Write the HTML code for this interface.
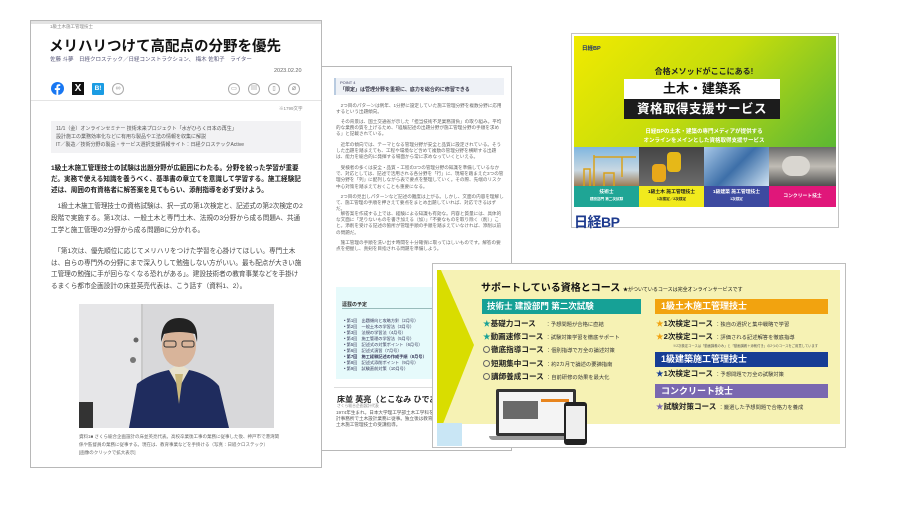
<!DOCTYPE html>
<html><head><meta charset="utf-8">
<style>
*{margin:0;padding:0;box-sizing:border-box}
body{width:900px;height:515px;background:#fff;position:relative;overflow:hidden;font-family:"Liberation Sans","Noto Sans CJK JP",sans-serif;color:#222}
.a{position:absolute}
.t{white-space:nowrap}
.card1{left:30px;top:20px;width:292px;height:448px;border:1px solid #b8b8b8;background:#fff}
.mid{left:321px;top:66px;width:191px;height:385px;border:1px solid #b8b8b8;background:#fff;overflow:hidden}
.mid p{position:absolute;left:14px;width:168px;font-size:4.6px;line-height:6.2px;color:#666}
.c4{left:432px;top:263px;width:414px;height:185px;border:1px solid #bdbdbd;background:#fff}
.it{font-size:7.6px;font-weight:bold;color:#222;line-height:10px}
.it span{font-size:5.3px;font-weight:normal;color:#333}
.circ{display:inline-block;width:7px;height:7px;border:1px solid #666;border-radius:50%;vertical-align:-1px;margin-right:1px}
</style></head><body>

<!-- Card 1 -->
<div class="a card1">
  <div class="a" style="left:0;top:0;width:290px;height:3px;background:#e3e3e3"></div>
  <div class="a t" style="left:19px;top:3px;font-size:4.5px;color:#888">1級土木施工管理技士</div>
  <div class="a t" style="left:18px;top:14px;font-size:14.5px;font-weight:bold;color:#111">メリハリつけて高配点の分野を優先</div>
  <div class="a t" style="left:19px;top:34px;font-size:5.5px;color:#557">佐藤 斗夢　日経クロステック／日経コンストラクション、 梅木 佐和子　ライター</div>
  <div class="a t" style="left:243px;top:47px;font-size:5.5px;color:#666">2023.02.20</div>
  <svg class="a" style="left:20px;top:61px" width="13" height="13" viewBox="0 0 13 13"><circle cx="6.5" cy="6.5" r="6.5" fill="#1877f2"/><path d="M7.3 13V8h1.6l.3-1.9H7.3V5c0-.6.2-1 1-1h1V2.4c-.2 0-.8-.1-1.5-.1-1.5 0-2.4.9-2.4 2.5v1.3H3.8V8h1.6v5z" fill="#fff"/></svg>
  <div class="a" style="left:41px;top:61px;width:12px;height:13px;background:#111;color:#fff;font-size:10px;line-height:13px;text-align:center;font-weight:bold">X</div>
  <div class="a" style="left:61px;top:62px;width:12px;height:12px;background:#1b9ce3;color:#fff;font-size:6.5px;line-height:12px;text-align:center;font-weight:bold;border-radius:1px">B!</div>
  <div class="a" style="left:81px;top:62px;width:12px;height:12px;border:1px solid #aaa;border-radius:50%;font-size:7px;line-height:10px;text-align:center;color:#999">∞</div>
  <div class="a" style="left:197px;top:62px;width:12px;height:12px;border:1px solid #aaa;border-radius:50%;font-size:6px;line-height:10px;text-align:center;color:#888">▭</div>
  <div class="a" style="left:217px;top:62px;width:12px;height:12px;border:1px solid #aaa;border-radius:50%;font-size:6px;line-height:10px;text-align:center;color:#888">▤</div>
  <div class="a" style="left:237px;top:62px;width:12px;height:12px;border:1px solid #aaa;border-radius:50%;font-size:6px;line-height:10px;text-align:center;color:#888">▯</div>
  <div class="a" style="left:257px;top:62px;width:12px;height:12px;border:1px solid #aaa;border-radius:50%;font-size:7px;line-height:10px;text-align:center;color:#888">⌀</div>
  <div class="a" style="left:0;top:79px;width:290px;height:1px;background:#e4e4e4"></div>
  <div class="a t" style="left:248px;top:85px;font-size:4.5px;color:#888">※1799文字</div>
  <div class="a" style="left:20px;top:100px;width:250px;height:32px;background:#f2f2f4"></div>
  <div class="a t" style="left:25px;top:104px;font-size:5px;line-height:8px;color:#555">11/1（金）オンラインセミナー 技術未来プロジェクト「水がひらく日本の再生」<br>設計施工の業務効率化などに有用な製品やエ法の情報を収集に解説<br>IT／製造／技術分野の製品・サービス選択支援情報サイト：日経クロステックActive</div>
  <div class="a" style="left:20px;top:142px;width:252px;font-size:6.6px;line-height:11.2px;font-weight:bold;color:#222">1級土木施工管理技士の試験は出題分野が広範囲にわたる。分野を絞った学習が重要だ。実務で使える知識を養うべく、基準書の章立てを意識して学習する。施工経験記述は、周囲の有資格者に解答案を見てもらい、添削指導を必ず受けよう。</div>
  <div class="a" style="left:20px;top:180px;width:252px;font-size:6.6px;line-height:11.8px;color:#444">　1級土木施工管理技士の資格試験は、択一式の第1次検定と、記述式の第2次検定の2段階で実施する。第1次は、一般土木と専門土木、法規の3分野から成る問題A、共通工学と施工管理の2分野から成る問題Bに分かれる。</div>
  <div class="a" style="left:20px;top:225px;width:252px;font-size:6.6px;line-height:11.6px;color:#444">　「第1次は、優先順位に応じてメリハリをつけた学習を心掛けてほしい。専門土木は、自らの専門外の分野にまで深入りして勉強しない方がいい。最も配点が大きい施工管理の勉強に手が回らなくなる恐れがある」。建設技術者の教育事業などを手掛けるまくら都市企画設計の床並英亮代表は、こう話す（資料1、2）。</div>
  <svg class="a" style="left:48px;top:283px" width="195" height="124" viewBox="0 0 195 124">
    <rect width="195" height="124" fill="#dedede"/>
    <rect x="0" y="0" width="62" height="124" fill="#e6e6e8"/>
    <rect x="62" y="0" width="2" height="124" fill="#c9c9c9"/>
    <rect x="64" y="0" width="131" height="124" fill="#d8d8da"/>
    <circle cx="57" cy="36" r="2.5" fill="#666"/><circle cx="54" cy="56" r="3" fill="#777"/>
    <rect x="0" y="98" width="14" height="26" fill="#333"/>
    <path d="M50 124 L58 80 Q70 70 90 66 L100 80 L110 66 Q130 70 140 82 L150 124Z" fill="#1f2c5e"/>
    <path d="M90 66 L100 84 L110 66 L104 62 L96 62Z" fill="#e8e2cc"/>
    <path d="M96 70 L100 100 L104 70Z" fill="#c9b77a"/>
    <ellipse cx="100" cy="42" rx="17" ry="21" fill="#d8b49a"/>
    <path d="M82 38 Q82 14 100 14 Q120 14 118 38 L116 30 Q100 26 85 30Z" fill="#222"/>
    <rect x="85" y="37" width="12" height="6" rx="2" fill="none" stroke="#333"/><rect x="103" y="37" width="12" height="6" rx="2" fill="none" stroke="#333"/>
  </svg>
  <div class="a" style="left:48px;top:412px;width:200px;font-size:4.5px;line-height:8px;color:#666">資料1■ さくら総合企画設計の床並英亮代表。高校卒業後工事の業務に従事した後、神戸市で港湾関係や監督員の業務に従事する。現在は、教育事業などを手掛ける（写真：日経クロステック）<br>[画像のクリックで拡大表示]</div>
</div>

<!-- Middle card -->
<div class="a mid">
  <div class="a" style="left:12px;top:11px;width:170px;height:17px;background:#eef1f6;border-left:2px solid #b9cbe0"></div>
  <div class="a t" style="left:18px;top:13px;font-size:4px;color:#446">POINT 4</div>
  <div class="a t" style="left:18px;top:19px;font-size:5px;color:#334;font-weight:bold">「限定」は管理分野を重視に、底力を総合的に修習できる</div>
  <p style="top:36px">　2つ目のパターンは例年、1分野に設定していた施工管理分野を複数分野に応用するという出題傾向。</p>
  <p style="top:52px">　その背景は、国土交通省が示した「担当技術不足業務請負」の取り組み。平均的な業務の質を上げるため、「経験記述の出題分野が施工管理分野の手順を求める」と記載されている。</p>
  <p style="top:75px">　近年の傾向では、テーマとなる管理分野が安全と品質に設定されている。そうした出題を踏まえても、工程や環境など含めて複数の管理分野を横断する出題は、能力を総合的に発揮する場面から常に求めなっていくといえる。</p>
  <p style="top:98px">　受検者の多くは安全・品質・工程の3つの管理分野の知識を準備しているなかで、対応としては、記述で活用される各分野を「行」に、現場を踏まえた3つの管理分野を「列」に配列しながら表で要点を整理していく。その際、先端のリスク中心対策を踏まえておくことも重要になる。</p>
  <p style="top:127px">　2つ目の見出しパターンなど記述の難度は上がる。しかし、文面の内容を理解して、施工管理の手順を押さえて要点をまとめ出題していれば、対応できるはずだ。</p>
  <p style="top:144px">　解答案を作成する上では、経験による知識も有効な。内容と質量には、具体的な文面に「足りないものを書き加える（加）」「不要なものを取り除く（削）」こと。添削を受ける記述の箇所が管理手順の手順を踏まえていなければ、添削以前の問題だ。</p>
  <p style="top:173px">　施工管理の手順を洗い出す時間を十分確保に取ってほしいものです。解答の要点を把握し、真剣を目指される問題を準備しよう。</p>
  <div class="a" style="left:14px;top:220px;width:170px;height:92px;background:#e6fafb"></div>
  <div class="a t" style="left:20px;top:234px;font-size:5px;font-weight:bold;color:#333">連載の予定</div>
  <div class="a" style="left:20px;top:241px;width:150px;height:1px;background:#9bb"></div>
  <div class="a" style="left:22px;top:251px;font-size:4.2px;line-height:6px;color:#335">• 第1回　出題傾向と攻略方針（2月号）<br>• 第2回　一般土木の学習法（3月号）<br>• 第3回　法規の学習法（4月号）<br>• 第4回　施工管理の学習法（5月号）<br>• 第5回　記述式の対策ポイント（6月号）<br>• 第6回　記述式演習（7月号）<br><b>• 第7回　施工経験記述の作成手順（8月号）</b><br>• 第8回　記述式添削ポイント（9月号）<br>• 第9回　試験直前対策（10月号）</div>
  <div class="a" style="left:12px;top:320px;width:170px;height:1px;background:#ddd"></div>
  <div class="a t" style="left:15px;top:327px;font-size:8px;font-weight:bold;color:#222">床並 英亮（とこなみ ひであき）</div>
  <div class="a t" style="left:15px;top:337px;font-size:3.8px;color:#888">さくら総合企画設計代表</div>
  <p style="top:343px;color:#555">1974年生まれ。日本大学理工学部土木工学科を卒業後、建設コンサルタントや設計事務所で土木設計業務に従事。独立後は教育研修など幅広い事業を手掛ける。土木施工管理技士の受講指導。</p>
</div>

<!-- Banner card -->
<div class="a" style="left:571px;top:33px;width:268px;height:195px;border:1px solid #c2c2c2;background:#fff">
  <div class="a" style="left:2px;top:2px;width:262px;height:171px;background:linear-gradient(135deg,#f1ea00 0%,#c7dd0b 40%,#73c02c 75%,#3fae3a 100%)"></div>
  <div class="a t" style="left:10px;top:10px;font-size:5.5px;font-weight:bold;color:#1c2f6d">日経BP</div>
  <div class="a t" style="left:0;width:264px;top:32px;text-align:center;font-size:8px;font-weight:bold;color:#222">合格メソッドがここにある!</div>
  <div class="a t" style="left:52px;top:45px;width:156px;height:20px;background:#fff;text-align:center;font-size:13px;line-height:20px;font-weight:bold;color:#111">土木・建築系</div>
  <div class="a t" style="left:52px;top:65px;width:156px;height:20px;background:#1c1c1c;text-align:center;font-size:12.5px;line-height:20px;font-weight:bold;color:#fff;letter-spacing:.5px">資格取得支援サービス</div>
  <div class="a t" style="left:0;width:264px;top:94px;text-align:center;font-size:5.5px;line-height:9px;font-weight:bold;color:#fff">日経BPの土木・建築の専門メディアが提供する<br>オンラインをメインとした資格取得支援サービス</div>
  <div class="a" style="left:2px;top:113px;width:65px;height:39px;background:linear-gradient(#7fb6df,#c9d8e2 60%,#9a7b55)"></div>
  <svg class="a" style="left:2px;top:113px" width="65" height="39"><path d="M20 39V8M20 10H62M48 10V30M10 39V22h6v17M30 39V26h10v13" stroke="#d9a21a" stroke-width="1.5" fill="none"/></svg>
  <div class="a" style="left:67px;top:113px;width:65px;height:39px;background:linear-gradient(#444,#6b6b6b)"></div>
  <div class="a" style="left:95px;top:118px;width:14px;height:20px;background:#e6b818;border-radius:4px"></div>
  <div class="a" style="left:80px;top:130px;width:14px;height:18px;background:#e9a81a;border-radius:4px"></div>
  <div class="a" style="left:132px;top:113px;width:65px;height:39px;background:linear-gradient(135deg,#a8c8e8,#3d6fa8 50%,#cfe3f3)"></div>
  <div class="a" style="left:197px;top:113px;width:67px;height:39px;background:linear-gradient(#6b6b6b,#c0bcb5 50%,#4f4f4f)"></div>
  <div class="a" style="left:210px;top:122px;width:28px;height:20px;background:#d9d6d0;border-radius:10px"></div>
  <div class="a" style="left:2px;top:152px;width:65px;height:21px;background:#1fa595;color:#fff;font-size:4.8px;text-align:center;line-height:6px;padding-top:4px;font-weight:bold">技術士<br><span style="font-size:3.6px">建設部門 第二次試験</span></div>
  <div class="a" style="left:67px;top:152px;width:65px;height:21px;background:#f1ea1d;color:#222;font-size:4.8px;text-align:center;line-height:6px;padding-top:4px;font-weight:bold">1級土木 施工管理技士<br><span style="font-size:3.6px">1次検定／2次検定</span></div>
  <div class="a" style="left:132px;top:152px;width:65px;height:21px;background:#3d4aa0;color:#fff;font-size:4.8px;text-align:center;line-height:6px;padding-top:4px;font-weight:bold">1級建築 施工管理技士<br><span style="font-size:3.6px">1次検定</span></div>
  <div class="a" style="left:197px;top:152px;width:67px;height:21px;background:#e0177a;color:#fff;font-size:4.8px;text-align:center;line-height:21px;font-weight:bold">コンクリート技士</div>
  <div class="a t" style="left:2px;top:178px;font-size:14px;font-weight:bold;color:#1d3a8e;letter-spacing:-.5px">日経BP</div>
</div>

<!-- Course card -->
<div class="a c4">
  <div class="a" style="left:4px;top:6px;width:403px;height:154px;background:#f6f2b4"></div>
  <svg class="a" style="left:4px;top:6px" width="40" height="175"><path d="M0 0 H4 L37 75 L0 169Z" fill="#d9dd00"/></svg>
  <div class="a" style="left:4px;top:159px;width:25px;height:23px;background:#c9e6f5"></div>
  <div class="a t" style="left:48px;top:15px;font-size:10px;font-weight:bold;color:#111">サポートしている資格とコース <span style="font-size:5px;font-weight:normal">★がついているコースは完全オンラインサービスです</span></div>
  <div class="a t" style="left:49px;top:35px;width:159px;height:15px;background:#16a196;color:#fff;font-size:8.5px;line-height:15px;font-weight:bold;padding-left:5px">技術士 建設部門 第二次試験</div>
  <div class="a t it" style="left:50px;top:55px"><span style="color:#18a196;font-size:7.6px">★</span>基礎力コース　 <span>：予想問題が合格に直結</span></div>
  <div class="a t it" style="left:50px;top:68px"><span style="color:#18a196;font-size:7.6px">★</span>動画速修コース <span>：試験対策学習を徹底サポート</span></div>
  <div class="a t it" style="left:50px;top:81px"><i class="circ"></i>徹底指導コース <span>：個別指導で万全の論述対策</span></div>
  <div class="a t it" style="left:50px;top:95px"><i class="circ"></i>短期集中コース <span>：約2カ月で論述の要諦指南</span></div>
  <div class="a t it" style="left:50px;top:108px"><i class="circ"></i>講師養成コース <span>：自前研修の効果を最大化</span></div>
  <div class="a" style="left:63px;top:125px;width:80px;height:47px;background:#333;border-radius:2px"></div>
  <div class="a" style="left:66px;top:128px;width:74px;height:41px;background:#f4f4f4"></div>
  <div class="a" style="left:70px;top:137px;width:35px;height:18px;background:#6a6a6a"></div>
  <div class="a" style="left:108px;top:135px;width:28px;height:3px;background:#e8851e"></div>
  <div class="a" style="left:56px;top:172px;width:94px;height:4px;background:#999;border-radius:0 0 4px 4px"></div>
  <div class="a" style="left:131px;top:138px;width:23px;height:43px;background:#222;border-radius:3px"></div>
  <div class="a" style="left:133px;top:142px;width:19px;height:33px;background:#eee"></div>
  <div class="a t" style="left:222px;top:35px;width:173px;height:15px;background:#f2a30f;color:#fff;font-size:9px;line-height:15px;font-weight:bold;padding-left:6px">1級土木施工管理技士</div>
  <div class="a t it" style="left:223px;top:55px"><span style="color:#f2a30f;font-size:7.6px">★</span>1次検定コース <span>：独自の選択と集中戦略で学習</span></div>
  <div class="a t it" style="left:223px;top:68px"><span style="color:#f2a30f;font-size:7.6px">★</span>2次検定コース <span>：評価される記述解答を徹底指導</span></div>
  <div class="a t" style="left:240px;top:79px;font-size:3.3px;color:#555">※2次検定コースは「動画講義のみ」と「動画講義＋添削付き」の2つのコースをご用意しています</div>
  <div class="a t" style="left:222px;top:88px;width:173px;height:15px;background:#163d95;color:#fff;font-size:9px;line-height:15px;font-weight:bold;padding-left:6px">1級建築施工管理技士</div>
  <div class="a t it" style="left:223px;top:105px"><span style="color:#163d95;font-size:7.6px">★</span>1次検定コース <span>：予想問題で万全の試験対策</span></div>
  <div class="a t" style="left:222px;top:120px;width:173px;height:14px;background:#7a68b0;color:#fff;font-size:9px;line-height:14px;font-weight:bold;padding-left:6px">コンクリート技士</div>
  <div class="a t it" style="left:223px;top:138px"><span style="color:#7a68b0;font-size:7.6px">★</span>試験対策コース <span>：厳選した予想問題で合格力を養成</span></div>
</div>
</body></html>
